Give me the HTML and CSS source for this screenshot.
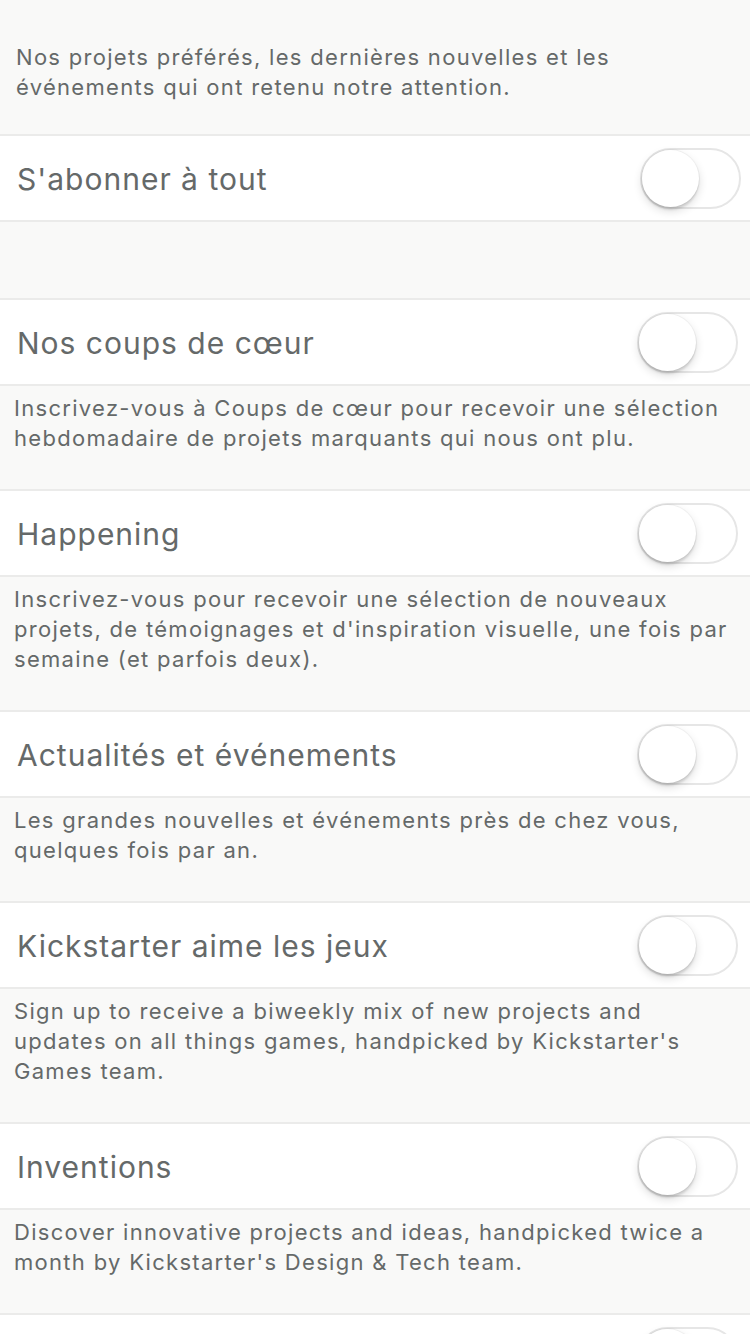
FILE: index.html
```html
<!DOCTYPE html>
<html lang="fr">
<head>
<meta charset="utf-8">
<title>Newsletters</title>
<link rel="stylesheet" href="styles.css">
</head>
<body>
<main class="page">
  <p class="intro">Nos projets préférés, les dernières nouvelles et les événements qui ont retenu notre attention.</p>

  <div class="row">
    <span class="title">S'abonner à tout</span>
    <span class="switch switch--first"><span class="knob"></span></span>
  </div>

  <div class="gap"></div>

  <div class="row">
    <span class="title">Nos coups de cœur</span>
    <span class="switch"><span class="knob"></span></span>
  </div>
  <p class="desc">Inscrivez-vous à Coups de cœur pour recevoir une sélection hebdomadaire de projets marquants qui nous ont plu.</p>

  <div class="row">
    <span class="title">Happening</span>
    <span class="switch"><span class="knob"></span></span>
  </div>
  <p class="desc">Inscrivez-vous pour recevoir une sélection de nouveaux projets, de témoignages et d'inspiration visuelle, une fois par semaine (et parfois deux).</p>

  <div class="row">
    <span class="title">Actualités et événements</span>
    <span class="switch"><span class="knob"></span></span>
  </div>
  <p class="desc">Les grandes nouvelles et événements près de chez vous, quelques fois par an.</p>

  <div class="row">
    <span class="title">Kickstarter aime les jeux</span>
    <span class="switch"><span class="knob"></span></span>
  </div>
  <p class="desc">Sign up to receive a biweekly mix of new projects and updates on all things games, handpicked by Kickstarter's Games team.</p>

  <div class="row">
    <span class="title">Inventions</span>
    <span class="switch"><span class="knob"></span></span>
  </div>
  <p class="desc">Discover innovative projects and ideas, handpicked twice a month by Kickstarter's Design &amp; Tech team.</p>

  <div class="row row--end">
    <span class="switch"><span class="knob"></span></span>
  </div>
</main>
</body>
</html>
```

FILE: styles.css
```css
html, body {
  margin: 0;
  padding: 0;
  background: #f9f9f8;
}

.page {
  font-family: Inter, "Liberation Sans", "Noto Sans", sans-serif;
  color: #656969;
  display: flex;
  flex-direction: column;
}

.intro {
  margin: 0;
  height: 92px;
  padding: 42px 20px 0 16px;
  font-size: 22px;
  line-height: 30px;
  letter-spacing: 1.3px;
  border-bottom: 2px solid #ebebea;
}

.row {
  height: 84px;
  flex: none;
  background: #ffffff;
  display: flex;
  align-items: center;
  justify-content: space-between;
  padding: 0 0 0 17px;
  border-bottom: 2px solid #ebebea;
}

.row--end {
  justify-content: flex-end;
}

.title {
  font-size: 30px;
  line-height: 36px;
  letter-spacing: 1px;
  padding-top: 2px;
}

.gap {
  height: 76px;
  flex: none;
  border-bottom: 2px solid #ebebea;
}

.desc {
  margin: 0;
  padding: 7px 20px 36px 14px;
  font-size: 22px;
  line-height: 30px;
  letter-spacing: 1.3px;
  border-bottom: 2px solid #ebebea;
}

.switch {
  position: relative;
  flex: none;
  width: 101px;
  height: 61px;
  box-sizing: border-box;
  border: 2px solid #e6e6e6;
  border-radius: 31px;
  background: #ffffff;
  margin-right: 12px;
}

.switch--first {
  margin-right: 9px;
}

.knob {
  position: absolute;
  left: 0;
  top: 0;
  width: 57px;
  height: 57px;
  border-radius: 50%;
  background: #ffffff;
  box-shadow: 0 0 0 1px rgba(0, 0, 0, 0.04), 0 3px 2px rgba(0, 0, 0, 0.1), 0 4px 10px rgba(0, 0, 0, 0.14);
}
```
